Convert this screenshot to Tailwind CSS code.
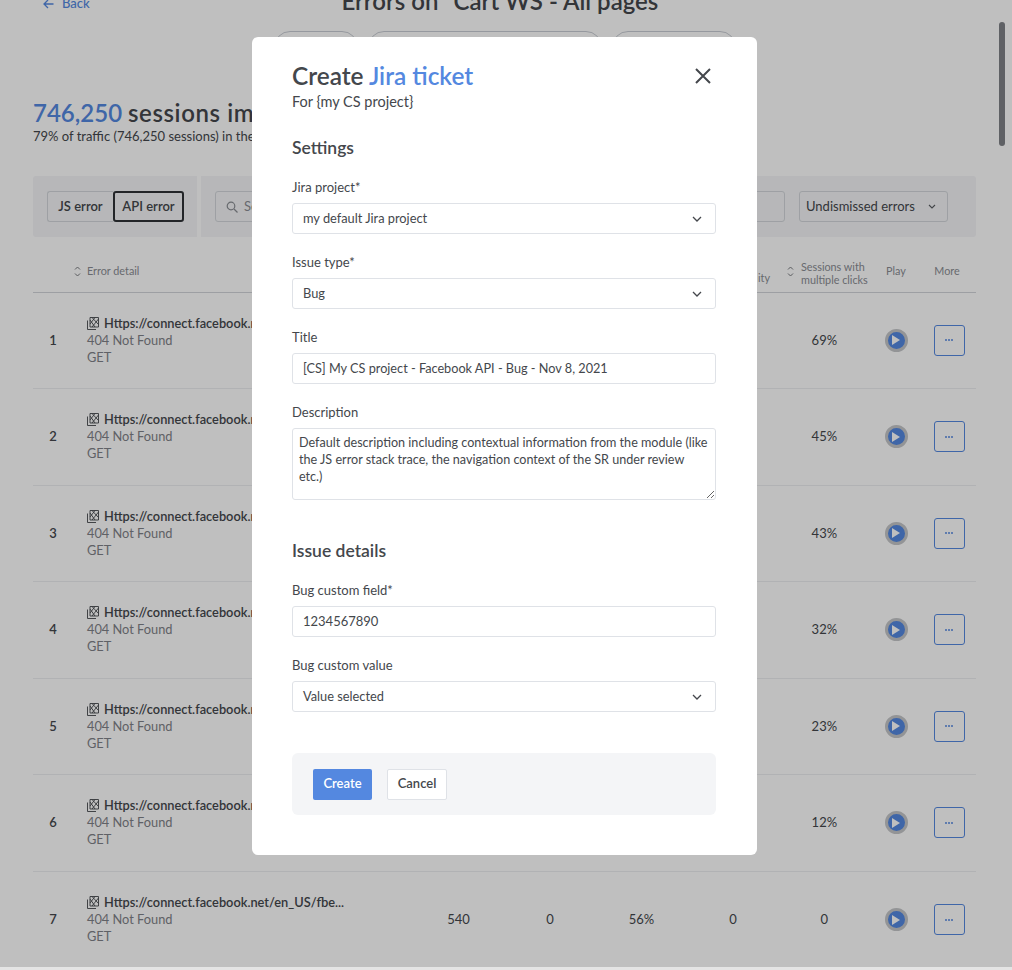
<!DOCTYPE html>
<html lang="en">
<head>
    <meta charset="UTF-8">
    <meta name="viewport" content="width=device-width, initial-scale=1.0">
    <title>Create Jira ticket</title>
    <script src="https://cdn.jsdelivr.net/npm/@tailwindcss/browser@4"></script>
</head>
<body class="bg-white text-[#44474c] font-[Lato,sans-serif]">
<div class="relative h-[970px] w-[1012px] overflow-hidden">

    <!-- Page behind the modal -->
    <div class="-mt-[12px] px-[33px] w-[1009px]">
        <div class="relative h-[32px] flex items-center justify-center">
            <a href="#" class="absolute left-[10px] top-[6px] flex items-center gap-[8px] text-[13px] font-medium text-[#5488e0]">
                <svg class="w-[11px] h-[10px]" viewBox="0 0 11 10" fill="none" stroke="currentColor" stroke-width="1.3"><path d="M10.5 5H1M5 1 1 5l4 4"/></svg>
                Back
            </a>
            <h1 class="text-[24px] font-semibold leading-none mt-[-6px]">Errors on "Cart WS - All pages"</h1>
        </div>
        <div class="flex justify-center gap-[10px] h-[12px] mt-[11px]">
            <div class="w-[84px] h-[32px] rounded-[16px] border border-[#c9cdd4]"></div>
            <div class="w-[234px] h-[32px] rounded-[16px] border border-[#c9cdd4]"></div>
            <div class="w-[124px] h-[32px] rounded-[16px] border border-[#c9cdd4]"></div>
        </div>

        <h2 class="mt-[55px] text-[24px] leading-[30px] font-semibold"><span class="text-[#5488e0]">746,250</span> <span class="tracking-[0.6px]">sessions impacted</span></h2>
        <p class="text-[13px] leading-[16px]">79% of traffic (746,250 sessions) in the last 7 days</p>

        <!-- Filters -->
        <div class="flex gap-[4px] mt-[32px] h-[61px]">
            <div class="w-[164px] bg-[#f4f5f7] flex items-center pl-[14px] rounded-l-[3px]">
                <button class="w-[66px] h-[31px] border border-[#d3d6db] border-r-0 rounded-l-[3px] text-[13px] font-semibold">JS error</button>
                <button class="w-[71px] h-[31px] border-2 border-[#2f3236] rounded-[3px] text-[13px] font-semibold">API error</button>
            </div>
            <div class="flex-1 bg-[#f4f5f7] flex items-center pl-[14px] rounded-r-[3px]">
                <div class="w-[570px] h-[31px] border border-[#d3d6db] rounded-[3px] flex items-center pl-[10px] gap-[6px] text-[13px] text-[#8a8d93]">
                    <svg class="w-[12px] h-[12px]" viewBox="0 0 12 12" fill="none" stroke="#8a8d93" stroke-width="1.2"><circle cx="5" cy="5" r="3.8"/><path d="m8 8 3.5 3.5"/></svg>
                    Search
                </div>
                <div class="ml-[14px] w-[149px] h-[31px] border border-[#d3d6db] rounded-[3px] flex items-center justify-between pl-[6px] pr-[11px] text-[13px]">
                    Undismissed errors
                    <svg class="w-[8px] h-[5px]" viewBox="0 0 8 5" fill="none" stroke="#5a5d62" stroke-width="1.1"><path d="m1 1 3 3 3-3"/></svg>
                </div>
            </div>
        </div>

        <!-- Table header -->
        <div class="flex items-center h-[55.5px] pt-[14px] border-b border-[#d2d5da] text-[10.8px] leading-[14px] text-[#8a8d93]">
            <div class="w-[54px] flex justify-end pr-[6px]">
                <svg class="w-[7px] h-[11px]" viewBox="0 0 7 11" fill="none" stroke="#77797e" stroke-width="1"><path d="m1 3.5 2.5-2.5L6 3.5M1 7.5 3.5 10 6 7.5"/></svg>
            </div>
            <div class="w-[326px]">Error detail</div>
            <div class="w-[374px] pr-[17px] pt-[14px] text-right">ity</div>
            <div class="w-[83px] flex items-center gap-[7px]">
                <svg class="w-[7px] h-[11px] shrink-0" viewBox="0 0 7 11" fill="none" stroke="#77797e" stroke-width="1"><path d="m1 3.5 2.5-2.5L6 3.5M1 7.5 3.5 10 6 7.5"/></svg>
                <span class="whitespace-nowrap leading-[13px] pt-[3px]">Sessions with<br>multiple clicks</span>
            </div>
            <div class="w-[52px] text-center">Play</div>
            <div class="w-[54px] text-center pr-[4px]">More</div>
        </div>

        <!-- Rows -->
        <div class="flex items-center h-[96.5px] border-b border-[#eceef1] text-[13px]">
            <div class="w-[40px] text-center font-semibold">1</div>
            <div class="w-[14px]"></div>
            <div class="w-[326px] leading-[17px]">
                <div class="flex items-center gap-[5px] font-semibold text-[12.8px]"><svg class="w-[12px] h-[13px]" viewBox="0 0 12 13" fill="none" stroke="#44474c" stroke-width="0.9"><path d="M.5 3.5v9H9"/><path d="M3 .5h8.5v9.5H3zM5 .5l6.5 7M11.5 2 5 10M3 3l5 7M8 .5 3 7"/></svg>Https://connect.facebook.net/en_US/fbe...</div>
                <div class="text-[#7f8288] text-[12.8px]">404 Not Found</div>
                <div class="text-[#7f8288] text-[12.8px]">GET</div>
            </div>
            <div class="w-[366px]"></div>
            <div class="w-[91.5px] text-center">69%</div>
            <div class="w-[52px] flex justify-center"><span class="w-[23px] h-[23px] rounded-full bg-[#5488e0] border-[3px] border-[#c4c6c9] flex items-center justify-center"><svg class="w-[8px] h-[10px]" viewBox="0 0 8 10" fill="white"><path d="M0 0v10l8-5z"/></svg></span></div>
            <div class="w-[54px] flex justify-center"><span class="w-[31px] h-[31px] border border-[#5488e0] rounded-[3px] flex items-center justify-center gap-[1px]"><i class="w-[2px] h-[2px] rounded-full bg-[#5488e0]"></i><i class="w-[2px] h-[2px] rounded-full bg-[#5488e0]"></i><i class="w-[2px] h-[2px] rounded-full bg-[#5488e0]"></i></span></div>
        </div>
        <div class="flex items-center h-[96.5px] border-b border-[#eceef1] text-[13px]">
            <div class="w-[40px] text-center font-semibold">2</div>
            <div class="w-[14px]"></div>
            <div class="w-[326px] leading-[17px]">
                <div class="flex items-center gap-[5px] font-semibold text-[12.8px]"><svg class="w-[12px] h-[13px]" viewBox="0 0 12 13" fill="none" stroke="#44474c" stroke-width="0.9"><path d="M.5 3.5v9H9"/><path d="M3 .5h8.5v9.5H3zM5 .5l6.5 7M11.5 2 5 10M3 3l5 7M8 .5 3 7"/></svg>Https://connect.facebook.net/en_US/fbe...</div>
                <div class="text-[#7f8288] text-[12.8px]">404 Not Found</div>
                <div class="text-[#7f8288] text-[12.8px]">GET</div>
            </div>
            <div class="w-[366px]"></div>
            <div class="w-[91.5px] text-center">45%</div>
            <div class="w-[52px] flex justify-center"><span class="w-[23px] h-[23px] rounded-full bg-[#5488e0] border-[3px] border-[#c4c6c9] flex items-center justify-center"><svg class="w-[8px] h-[10px]" viewBox="0 0 8 10" fill="white"><path d="M0 0v10l8-5z"/></svg></span></div>
            <div class="w-[54px] flex justify-center"><span class="w-[31px] h-[31px] border border-[#5488e0] rounded-[3px] flex items-center justify-center gap-[1px]"><i class="w-[2px] h-[2px] rounded-full bg-[#5488e0]"></i><i class="w-[2px] h-[2px] rounded-full bg-[#5488e0]"></i><i class="w-[2px] h-[2px] rounded-full bg-[#5488e0]"></i></span></div>
        </div>
        <div class="flex items-center h-[96.5px] border-b border-[#eceef1] text-[13px]">
            <div class="w-[40px] text-center font-semibold">3</div>
            <div class="w-[14px]"></div>
            <div class="w-[326px] leading-[17px]">
                <div class="flex items-center gap-[5px] font-semibold text-[12.8px]"><svg class="w-[12px] h-[13px]" viewBox="0 0 12 13" fill="none" stroke="#44474c" stroke-width="0.9"><path d="M.5 3.5v9H9"/><path d="M3 .5h8.5v9.5H3zM5 .5l6.5 7M11.5 2 5 10M3 3l5 7M8 .5 3 7"/></svg>Https://connect.facebook.net/en_US/fbe...</div>
                <div class="text-[#7f8288] text-[12.8px]">404 Not Found</div>
                <div class="text-[#7f8288] text-[12.8px]">GET</div>
            </div>
            <div class="w-[366px]"></div>
            <div class="w-[91.5px] text-center">43%</div>
            <div class="w-[52px] flex justify-center"><span class="w-[23px] h-[23px] rounded-full bg-[#5488e0] border-[3px] border-[#c4c6c9] flex items-center justify-center"><svg class="w-[8px] h-[10px]" viewBox="0 0 8 10" fill="white"><path d="M0 0v10l8-5z"/></svg></span></div>
            <div class="w-[54px] flex justify-center"><span class="w-[31px] h-[31px] border border-[#5488e0] rounded-[3px] flex items-center justify-center gap-[1px]"><i class="w-[2px] h-[2px] rounded-full bg-[#5488e0]"></i><i class="w-[2px] h-[2px] rounded-full bg-[#5488e0]"></i><i class="w-[2px] h-[2px] rounded-full bg-[#5488e0]"></i></span></div>
        </div>
        <div class="flex items-center h-[96.5px] border-b border-[#eceef1] text-[13px]">
            <div class="w-[40px] text-center font-semibold">4</div>
            <div class="w-[14px]"></div>
            <div class="w-[326px] leading-[17px]">
                <div class="flex items-center gap-[5px] font-semibold text-[12.8px]"><svg class="w-[12px] h-[13px]" viewBox="0 0 12 13" fill="none" stroke="#44474c" stroke-width="0.9"><path d="M.5 3.5v9H9"/><path d="M3 .5h8.5v9.5H3zM5 .5l6.5 7M11.5 2 5 10M3 3l5 7M8 .5 3 7"/></svg>Https://connect.facebook.net/en_US/fbe...</div>
                <div class="text-[#7f8288] text-[12.8px]">404 Not Found</div>
                <div class="text-[#7f8288] text-[12.8px]">GET</div>
            </div>
            <div class="w-[366px]"></div>
            <div class="w-[91.5px] text-center">32%</div>
            <div class="w-[52px] flex justify-center"><span class="w-[23px] h-[23px] rounded-full bg-[#5488e0] border-[3px] border-[#c4c6c9] flex items-center justify-center"><svg class="w-[8px] h-[10px]" viewBox="0 0 8 10" fill="white"><path d="M0 0v10l8-5z"/></svg></span></div>
            <div class="w-[54px] flex justify-center"><span class="w-[31px] h-[31px] border border-[#5488e0] rounded-[3px] flex items-center justify-center gap-[1px]"><i class="w-[2px] h-[2px] rounded-full bg-[#5488e0]"></i><i class="w-[2px] h-[2px] rounded-full bg-[#5488e0]"></i><i class="w-[2px] h-[2px] rounded-full bg-[#5488e0]"></i></span></div>
        </div>
        <div class="flex items-center h-[96.5px] border-b border-[#eceef1] text-[13px]">
            <div class="w-[40px] text-center font-semibold">5</div>
            <div class="w-[14px]"></div>
            <div class="w-[326px] leading-[17px]">
                <div class="flex items-center gap-[5px] font-semibold text-[12.8px]"><svg class="w-[12px] h-[13px]" viewBox="0 0 12 13" fill="none" stroke="#44474c" stroke-width="0.9"><path d="M.5 3.5v9H9"/><path d="M3 .5h8.5v9.5H3zM5 .5l6.5 7M11.5 2 5 10M3 3l5 7M8 .5 3 7"/></svg>Https://connect.facebook.net/en_US/fbe...</div>
                <div class="text-[#7f8288] text-[12.8px]">404 Not Found</div>
                <div class="text-[#7f8288] text-[12.8px]">GET</div>
            </div>
            <div class="w-[366px]"></div>
            <div class="w-[91.5px] text-center">23%</div>
            <div class="w-[52px] flex justify-center"><span class="w-[23px] h-[23px] rounded-full bg-[#5488e0] border-[3px] border-[#c4c6c9] flex items-center justify-center"><svg class="w-[8px] h-[10px]" viewBox="0 0 8 10" fill="white"><path d="M0 0v10l8-5z"/></svg></span></div>
            <div class="w-[54px] flex justify-center"><span class="w-[31px] h-[31px] border border-[#5488e0] rounded-[3px] flex items-center justify-center gap-[1px]"><i class="w-[2px] h-[2px] rounded-full bg-[#5488e0]"></i><i class="w-[2px] h-[2px] rounded-full bg-[#5488e0]"></i><i class="w-[2px] h-[2px] rounded-full bg-[#5488e0]"></i></span></div>
        </div>
        <div class="flex items-center h-[96.5px] border-b border-[#eceef1] text-[13px]">
            <div class="w-[40px] text-center font-semibold">6</div>
            <div class="w-[14px]"></div>
            <div class="w-[326px] leading-[17px]">
                <div class="flex items-center gap-[5px] font-semibold text-[12.8px]"><svg class="w-[12px] h-[13px]" viewBox="0 0 12 13" fill="none" stroke="#44474c" stroke-width="0.9"><path d="M.5 3.5v9H9"/><path d="M3 .5h8.5v9.5H3zM5 .5l6.5 7M11.5 2 5 10M3 3l5 7M8 .5 3 7"/></svg>Https://connect.facebook.net/en_US/fbe...</div>
                <div class="text-[#7f8288] text-[12.8px]">404 Not Found</div>
                <div class="text-[#7f8288] text-[12.8px]">GET</div>
            </div>
            <div class="w-[366px]"></div>
            <div class="w-[91.5px] text-center">12%</div>
            <div class="w-[52px] flex justify-center"><span class="w-[23px] h-[23px] rounded-full bg-[#5488e0] border-[3px] border-[#c4c6c9] flex items-center justify-center"><svg class="w-[8px] h-[10px]" viewBox="0 0 8 10" fill="white"><path d="M0 0v10l8-5z"/></svg></span></div>
            <div class="w-[54px] flex justify-center"><span class="w-[31px] h-[31px] border border-[#5488e0] rounded-[3px] flex items-center justify-center gap-[1px]"><i class="w-[2px] h-[2px] rounded-full bg-[#5488e0]"></i><i class="w-[2px] h-[2px] rounded-full bg-[#5488e0]"></i><i class="w-[2px] h-[2px] rounded-full bg-[#5488e0]"></i></span></div>
        </div>
        <div class="flex items-center h-[96.5px] text-[13px]">
            <div class="w-[40px] text-center font-semibold">7</div>
            <div class="w-[14px]"></div>
            <div class="w-[326px] leading-[17px]">
                <div class="flex items-center gap-[5px] font-semibold text-[12.8px]"><svg class="w-[12px] h-[13px]" viewBox="0 0 12 13" fill="none" stroke="#44474c" stroke-width="0.9"><path d="M.5 3.5v9H9"/><path d="M3 .5h8.5v9.5H3zM5 .5l6.5 7M11.5 2 5 10M3 3l5 7M8 .5 3 7"/></svg>Https://connect.facebook.net/en_US/fbe...</div>
                <div class="text-[#7f8288] text-[12.8px]">404 Not Found</div>
                <div class="text-[#7f8288] text-[12.8px]">GET</div>
            </div>
            <div class="w-[91.5px] text-center">540</div>
            <div class="w-[91.5px] text-center">0</div>
            <div class="w-[91.5px] text-center">56%</div>
            <div class="w-[91.5px] text-center">0</div>
            <div class="w-[91.5px] text-center">0</div>
            <div class="w-[52px] flex justify-center"><span class="w-[23px] h-[23px] rounded-full bg-[#5488e0] border-[3px] border-[#c4c6c9] flex items-center justify-center"><svg class="w-[8px] h-[10px]" viewBox="0 0 8 10" fill="white"><path d="M0 0v10l8-5z"/></svg></span></div>
            <div class="w-[54px] flex justify-center"><span class="w-[31px] h-[31px] border border-[#5488e0] rounded-[3px] flex items-center justify-center gap-[1px]"><i class="w-[2px] h-[2px] rounded-full bg-[#5488e0]"></i><i class="w-[2px] h-[2px] rounded-full bg-[#5488e0]"></i><i class="w-[2px] h-[2px] rounded-full bg-[#5488e0]"></i></span></div>
        </div>
    </div>

    <!-- Overlay -->
    <div class="absolute inset-0 bg-black/25 pl-[252px] pt-[37px]">
        <div class="absolute right-[7px] top-[22px] w-[6px] h-[124px] rounded-full bg-[#5f6165]"></div>

        <!-- Modal -->
        <div class="w-[505px] h-[818px] bg-white rounded-[6px] px-[40px] pt-[26px] text-[#44474c]">
            <div class="flex justify-between items-center h-[26px]">
                <h2 class="text-[24.4px] font-semibold leading-[26px]">Create <span class="text-[#5488e0]">Jira ticket</span></h2>
                <svg class="w-[16px] h-[16px] mr-[6px]" viewBox="0 0 16 16" fill="none" stroke="#44474c" stroke-width="2"><path d="m1 1 14 14M15 1 1 15"/></svg>
            </div>
            <p class="text-[14.5px] leading-[18px] mt-[4px]">For {my CS project}</p>

            <h3 class="text-[17.5px] font-semibold leading-[20px] mt-[27px]">Settings</h3>
            <div class="flex flex-col gap-[20px] mt-[21px] w-[424px]">
                <div>
                    <label class="block text-[13px] leading-[16px] mb-[8px]">Jira project*</label>
                    <div class="h-[31px] border border-[#dfe2e7] rounded-[3px] pl-[10px] pr-[13px] flex items-center justify-between text-[12.8px]">
                        my default Jira project
                        <svg class="w-[10px] h-[6px]" viewBox="0 0 10 6" fill="none" stroke="#44474c" stroke-width="1.3"><path d="m1 1 4 4 4-4"/></svg>
                    </div>
                </div>
                <div>
                    <label class="block text-[13px] leading-[16px] mb-[8px]">Issue type*</label>
                    <div class="h-[31px] border border-[#dfe2e7] rounded-[3px] pl-[10px] pr-[13px] flex items-center justify-between text-[12.8px]">
                        Bug
                        <svg class="w-[10px] h-[6px]" viewBox="0 0 10 6" fill="none" stroke="#44474c" stroke-width="1.3"><path d="m1 1 4 4 4-4"/></svg>
                    </div>
                </div>
                <div>
                    <label class="block text-[13px] leading-[16px] mb-[8px]">Title</label>
                    <input value="[CS] My CS project - Facebook API - Bug - Nov 8, 2021" class="block w-full h-[31px] border border-[#dfe2e7] rounded-[3px] px-[10px] pb-[2px] text-[12.7px]">
                </div>
                <div>
                    <label class="block text-[13px] leading-[16px] mb-[8px]">Description</label>
                    <textarea class="block w-full h-[72px] border border-[#dfe2e7] rounded-[3px] pl-[6px] pr-[2px] pt-[5px] text-[12.6px] leading-[17px]">Default description including contextual information from the module (like the JS error stack trace, the navigation context of the SR under review
etc.)</textarea>
                </div>
            </div>

            <h3 class="text-[17.5px] font-semibold leading-[20px] mt-[41px]">Issue details</h3>
            <div class="flex flex-col gap-[20px] mt-[21px] w-[424px]">
                <div>
                    <label class="block text-[13px] leading-[16px] mb-[8px]">Bug custom field*</label>
                    <input value="1234567890" class="block w-full h-[31px] border border-[#dfe2e7] rounded-[3px] px-[10px] pb-[2px] text-[13px]">
                </div>
                <div>
                    <label class="block text-[13px] leading-[16px] mb-[8px]">Bug custom value</label>
                    <div class="h-[31px] border border-[#dfe2e7] rounded-[3px] pl-[10px] pr-[13px] flex items-center justify-between text-[12.8px]">
                        Value selected
                        <svg class="w-[10px] h-[6px]" viewBox="0 0 10 6" fill="none" stroke="#44474c" stroke-width="1.3"><path d="m1 1 4 4 4-4"/></svg>
                    </div>
                </div>
            </div>

            <div class="mt-[41px] w-[424px] h-[62px] bg-[#f4f5f7] rounded-[6px] flex items-center pl-[21px] gap-[15px]">
                <button class="w-[59px] h-[31px] bg-[#5488e0] text-white rounded-[2px] text-[13px] font-semibold">Create</button>
                <button class="w-[60px] h-[31px] bg-white border border-[#dfe2e7] rounded-[2px] text-[13px] font-semibold">Cancel</button>
            </div>
        </div>
    </div>
    <div class="absolute left-0 right-0 bottom-0 h-[3px] bg-[#e4e4e4]"></div>
</div>
</body>
</html>
